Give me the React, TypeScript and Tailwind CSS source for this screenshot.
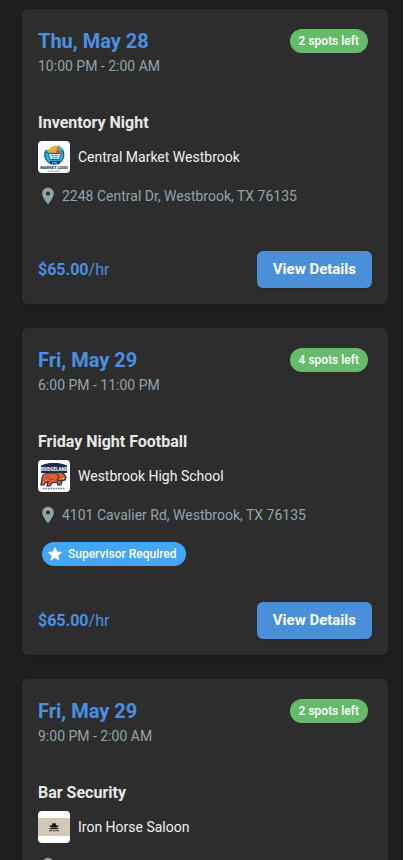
import type { ReactNode } from "react";
import { MdLocationOn, MdStar } from "react-icons/md";

type Shift = {
  id: number;
  date: string;
  time: string;
  spots: string;
  title: string;
  venue: string;
  logo: ReactNode;
  address?: string;
  supervisor?: boolean;
  rate?: string;
};

function MarketLogo() {
  return (
    <svg viewBox="0 0 32 32" className="h-8 w-8" aria-hidden="true">
      <path d="M8 9a9.500 9.500 0 1 0 17 1" fill="#35a9dc" stroke="#1d5f8a" strokeWidth="1.200" />
      <path d="M10 10.500c1-4 5-6.500 10-5.500l1 3-3 4-4-1-4 1z" fill="#f6a52c" />
      <path d="M20 5c3 1 5 3 5.500 5l-5 1-1-3z" fill="#40b5d6" stroke="#1d5f8a" strokeWidth=".6" />
      <path d="M18 10l3-1.500 2 2-1 2h-4z" fill="#e8503c" />
      <path d="M6.500 11.500H10l2 7h9l2.500-6H11" fill="#c9edf8" stroke="#1c6a96" strokeWidth="1" />
      <path d="M13 14.500h8M14 16.500h6M15 13v5M18 13v5" stroke="#48b2dc" strokeWidth=".8" />
      <path d="M12 20.500h10" stroke="#17344f" strokeWidth="1" />
      <circle cx="13" cy="22" r="1.200" fill="#17344f" />
      <circle cx="20.500" cy="22" r="1.200" fill="#17344f" />
      <text x="16" y="28" textAnchor="middle" fontSize="4" fontWeight="900" fill="#17344f" fontFamily="Roboto, sans-serif">
        MARKET LOGO
      </text>
      <path d="M9.500 30.200h13" stroke="#7f8e98" strokeWidth="1" strokeDasharray="1.500 .5" />
    </svg>
  );
}

function SchoolLogo() {
  return (
    <svg viewBox="0 0 32 32" className="h-8 w-8" aria-hidden="true">
      <path d="M3 5.500l4-1.500 5-1h8l5 1 4 1.500V13H3z" fill="#1b2f4c" />
      <path
        d="M4 19c0-4 3-6 7-6h7l5-1 3 2 2 3-1 3-3 1-1 4h-3l-1-3-5 1-2 3H9l1-4-3 1-1 2H3z"
        fill="#e0602c"
        stroke="#1b2f4c"
        strokeWidth="1.200"
      />
      <path d="M19 14l2 3-2 3 4 1 4-2" fill="none" stroke="#1b2f4c" strokeWidth="1" />
      <path d="M8 17l4 .500M11 20l5-1" stroke="#a83e1c" strokeWidth="1" />
      <path d="M23.500 18.500l3-.500-1 1.500z" fill="#fff" />
      <text x="16" y="10.500" textAnchor="middle" fontSize="4.500" fontWeight="900" fill="#f3f5f8" fontFamily="Roboto, sans-serif">
        BRIDGELAND
      </text>
      <path d="M5 28.500h22" stroke="#64748b" strokeWidth="1.600" strokeDasharray="1.500 1" />
    </svg>
  );
}

function SaloonLogo() {
  return (
    <svg viewBox="0 0 32 32" className="h-8 w-8" aria-hidden="true">
      <path d="M0 7h32v18H0z" fill="#d3c7b7" />
      <path d="M11 14c1 .8 2 .6 2.800.2L14.500 12l1.500.5 1.500-.5.700 2.200c.8.4 1.800.6 2.800-.2-.5 2-2.500 2.500-5 2.500S11.500 16 11 14z" fill="#171717" />
      <path d="M11.500 17.500h9M14 16.500v2M18 16.500v2" stroke="#171717" strokeWidth="1" />
      <path d="M11 19.700h10" stroke="#39342f" strokeWidth="1" strokeDasharray="3 .6" />
    </svg>
  );
}

const shifts: Shift[] = [
  {
    id: 1,
    date: "Thu, May 28",
    time: "10:00 PM - 2:00 AM",
    spots: "2 spots left",
    title: "Inventory Night",
    venue: "Central Market Westbrook",
    logo: <MarketLogo />,
    address: "2248 Central Dr, Westbrook, TX 76135",
    rate: "$65.00",
  },
  {
    id: 2,
    date: "Fri, May 29",
    time: "6:00 PM - 11:00 PM",
    spots: "4 spots left",
    title: "Friday Night Football",
    venue: "Westbrook High School",
    logo: <SchoolLogo />,
    address: "4101 Cavalier Rd, Westbrook, TX 76135",
    supervisor: true,
    rate: "$65.00",
  },
  {
    id: 3,
    date: "Fri, May 29",
    time: "9:00 PM - 2:00 AM",
    spots: "2 spots left",
    title: "Bar Security",
    venue: "Iron Horse Saloon",
    logo: <SaloonLogo />,
  },
];

function ShiftCard({ shift }: { shift: Shift }) {
  return (
    <article className="shrink-0 rounded-md bg-[#2d2d2d] p-4 shadow-sm">
      <div className="flex items-start justify-between pt-1 pr-1">
        <div>
          <h2 className="text-xl leading-6 font-bold text-[#4a90e2]">{shift.date}</h2>
          <p className="mt-[3px] text-sm leading-5 text-[#90a4ae]">{shift.time}</p>
        </div>
        <span className="rounded-full bg-[#66bb6a] px-[9px] text-xs leading-6 font-medium text-white">
          {shift.spots}
        </span>
      </div>

      <h3 className="mt-[37px] text-base leading-5 font-bold text-[#e8e8e8]">{shift.title}</h3>

      <div className="mt-2 flex items-center gap-2">
        <div className="overflow-hidden rounded-sm bg-white">{shift.logo}</div>
        <span className="text-sm text-[#f0f0f0]">{shift.venue}</span>
      </div>

      <div className="mt-[13px] flex h-5 items-center gap-1 text-[#90a4ae]">
        <MdLocationOn className="h-5 w-5 shrink-0" />
        <span className="text-sm">{shift.address}</span>
      </div>

      {shift.supervisor && (
        <div className="mt-[17px] ml-1 flex">
          <span className="flex h-6 items-center gap-1 rounded-full bg-[#42a5f5] pr-[9px] pl-1 text-xs font-medium text-white">
            <MdStar className="h-[18px] w-[18px]" />
            Supervisor Required
          </span>
        </div>
      )}

      {shift.rate && (
        <div className={`flex items-center justify-between ${shift.supervisor ? "mt-9" : "mt-[45px]"}`}>
          <p className="text-base text-[#4a90e2]">
            <span className="font-bold">{shift.rate}</span>/hr
          </p>
          <button
            type="button"
            className="rounded-md bg-[#4a90d9] px-4 py-2 text-[15px] leading-[21px] font-bold text-white shadow-sm"
          >
            View Details
          </button>
        </div>
      )}
    </article>
  );
}

export default function App() {
  return (
    <main className="flex h-screen flex-col gap-6 overflow-hidden border-r border-white bg-[#1e1e1e] pt-[9px] pr-[15px] pl-[22px] font-[Roboto,sans-serif]">
      {shifts.map((s) => (
        <ShiftCard key={s.id} shift={s} />
      ))}
    </main>
  );
}
